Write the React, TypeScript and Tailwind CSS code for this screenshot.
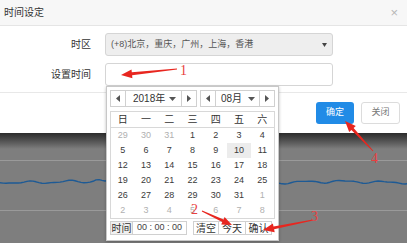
import React from "react";

const weeks: [number, boolean][][] = [
  [[29, false], [30, false], [31, false], [1, true], [2, true], [3, true], [4, true]],
  [[5, true], [6, true], [7, true], [8, true], [9, true], [10, true], [11, true]],
  [[12, true], [13, true], [14, true], [15, true], [16, true], [17, true], [18, true]],
  [[19, true], [20, true], [21, true], [22, true], [23, true], [24, true], [25, true]],
  [[26, true], [27, true], [28, true], [29, true], [30, true], [31, true], [1, false]],
  [[2, false], [3, false], [4, false], [5, false], [6, false], [7, false], [8, false]],
];
const weekdays = ["日", "一", "二", "三", "四", "五", "六"];

function arrowPts(tx: number, ty: number, hx: number, hy: number, head = 11, hw = 4.5, sw = 1.5, tw = 0.4) {
  const dx = hx - tx;
  const dy = hy - ty;
  const len = Math.hypot(dx, dy);
  const ux = dx / len;
  const uy = dy / len;
  const nx = -uy;
  const ny = ux;
  const bx = hx - ux * head;
  const by = hy - uy * head;
  const p = (x: number, y: number) => `${x.toFixed(1)},${y.toFixed(1)}`;
  return [
    p(tx + nx * tw, ty + ny * tw),
    p(bx + nx * sw, by + ny * sw),
    p(bx + nx * hw, by + ny * hw),
    p(hx, hy),
    p(bx - nx * hw, by - ny * hw),
    p(bx - nx * sw, by - ny * sw),
    p(tx - nx * tw, ty - ny * tw),
  ].join(" ");
}

function wavePath() {
  const pts: string[] = [];
  for (let x = 0; x <= 408; x += 3) {
    const y =
      49 +
      1.1 * Math.sin(x * 0.16) +
      0.5 * Math.sin(x * 0.31 + 1.3) +
      0.5 * Math.sin(x * 0.05 + 0.4) -
      (x > 92 && x < 104 ? 2.2 * Math.sin(((x - 92) / 12) * Math.PI) : 0);
    pts.push(`${x === 0 ? "M" : "L"}${x},${y.toFixed(2)}`);
  }
  return pts.join(" ");
}

const TriL = () => (
  <svg width="4" height="7" viewBox="0 0 4 7">
    <path d="M4 0 L0 3.5 L4 7 Z" fill="#555" />
  </svg>
);
const TriR = () => (
  <svg width="4" height="7" viewBox="0 0 4 7">
    <path d="M0 0 L4 3.5 L0 7 Z" fill="#555" />
  </svg>
);
const TriD = () => (
  <svg width="7" height="4" viewBox="0 0 7 4">
    <path d="M0 0 L7 0 L3.5 4 Z" fill="#555" />
  </svg>
);

export default function App() {
  return (
    <div className="relative w-[407px] h-[243px] overflow-hidden bg-white font-['Liberation_Sans','Noto_Sans_CJK_SC',sans-serif] text-[#333]">
      {/* header */}
      <div className="flex h-[26px] items-center justify-between border-b border-[#e5e5e5] bg-[#f7f7f7] pl-[4px] pr-[9px]">
        <span className="text-[10px] leading-none">时间设定</span>
        <span className="text-[13px] leading-none text-[#b8b8b8]">×</span>
      </div>

      {/* body */}
      <div className="flex h-[67px] flex-col gap-[7px] border-b border-[#e8e8e8] pt-[7px]">
        <div className="flex items-center">
          <div className="w-[91px] text-right text-[10px]">时区</div>
          <div className="ml-[14px] flex h-[23px] w-[228px] items-center justify-between rounded-[3px] border border-[#d5d5d5] bg-[#eeeeee] pl-[5px] pr-[5px]">
            <span className="text-[9px] text-[#555]">(+8)北京，重庆，广州，上海，香港</span>
            <svg width="5" height="4" viewBox="0 0 5 4">
              <path d="M0 0 L5 0 L2.5 4 Z" fill="#444" />
            </svg>
          </div>
        </div>
        <div className="flex items-center">
          <div className="w-[91px] text-right text-[10px]">设置时间</div>
          <div className="ml-[14px] h-[23px] w-[228px] rounded-[3px] border border-[#d5d5d5] bg-white" />
        </div>
      </div>

      {/* footer */}
      <div className="flex h-[40px] items-center justify-end gap-[7px] pr-[7px]">
        <div className="flex h-[22px] w-[38px] items-center justify-center rounded-[3px] bg-[#218be6] text-[9px] text-white">确定</div>
        <div className="flex h-[22px] w-[39px] items-center justify-center rounded-[3px] border border-[#dcdcdc] bg-white text-[9px] text-[#777]">关闭</div>
      </div>

      {/* chart */}
      <div className="relative h-[110px] bg-[#7e7e7e]">
        <div className="h-[16px] bg-linear-to-b from-[#2c2c2c] to-[#7e7e7e]" />
        <svg className="absolute inset-0" width="407" height="110" viewBox="0 0 407 110">
          <line x1="0" y1="27.5" x2="407" y2="27.5" stroke="#9a9a9a" strokeWidth="1" />
          <line x1="0" y1="77.5" x2="407" y2="77.5" stroke="#9a9a9a" strokeWidth="1" />
          <path d={wavePath()} fill="none" stroke="#1d5a95" strokeWidth="1.4" strokeLinejoin="round" />
        </svg>
      </div>

      {/* date picker popup */}
      <div className="absolute left-[106px] top-[86px] h-[155px] w-[173px] border border-[#c8c8c8] bg-white p-[3px] shadow-[0_1px_3px_rgba(0,0,0,0.25)]">
        <div className="flex h-[17px]">
          <div className="flex w-[87px] border border-[#d0d0d0]">
            <div className="flex w-[15px] items-center justify-center border-r border-[#d0d0d0]"><TriL /></div>
            <div className="flex flex-1 items-center justify-between pl-[7px] pr-[5px] text-[10px]">
              <span>2018年</span>
              <TriD />
            </div>
            <div className="flex w-[15px] items-center justify-center border-l border-[#d0d0d0]"><TriR /></div>
          </div>
          <div className="ml-[3px] flex w-[75px] border border-[#d0d0d0]">
            <div className="flex w-[15px] items-center justify-center border-r border-[#d0d0d0]"><TriL /></div>
            <div className="flex flex-1 items-center justify-between pl-[5px] pr-[4px] text-[10px]">
              <span>08月</span>
              <TriD />
            </div>
            <div className="flex w-[15px] items-center justify-center border-l border-[#d0d0d0]"><TriR /></div>
          </div>
        </div>

        <div className="mt-[4px] w-[165px] border border-[#d8d8d8]">
          <div className="grid h-[16px] grid-cols-7 border-b border-[#d8d8d8]">
            {weekdays.map((w) => (
              <div key={w} className="flex items-center justify-center text-[10px] text-[#333]">{w}</div>
            ))}
          </div>
          {weeks.map((row, ri) => (
            <div key={ri} className="grid h-[15px] grid-cols-7">
              {row.map(([d, cur], ci) => (
                <div
                  key={ci}
                  className={
                    "flex items-center justify-center text-[9px] " +
                    (cur ? "text-[#3a3a3a] " : "text-[#b0b0b0] ") +
                    (ri === 1 && ci === 5 ? "bg-[#ececec]" : "")
                  }
                >
                  {d}
                </div>
              ))}
            </div>
          ))}
        </div>

        <div className="mt-[2px] flex h-[14px] text-[10px]">
          <div className="flex w-[23px] items-center justify-center border border-[#d0d0d0] bg-[#f0f0f0]">时间</div>
          <div className="flex w-[54px] items-center justify-center border border-l-0 border-[#d0d0d0] text-[9px] text-[#444]">00 : 00 : 00</div>
          <div className="ml-[6px] flex w-[26px] items-center justify-center border border-[#d0d0d0]">清空</div>
          <div className="flex w-[27px] items-center justify-center border border-l-0 border-[#d0d0d0]">今天</div>
          <div className="flex w-[26px] items-center justify-center border border-l-0 border-[#d0d0d0]">确认</div>
        </div>
      </div>

      {/* annotations */}
      <svg className="pointer-events-none absolute inset-0" width="407" height="243" viewBox="0 0 407 243">
        <polygon points={arrowPts(177, 69, 121, 75)} fill="#e8261f" />
        <text x="180" y="75" fontFamily="Liberation Serif, serif" fontSize="14" fill="#e84040">1</text>
        <polygon points={arrowPts(202, 211, 232, 225, 10, 4)} fill="#e8261f" />
        <text x="191" y="214" fontFamily="Liberation Serif, serif" fontSize="14" fill="#e84040">2</text>
        <polygon points={arrowPts(313, 220, 263, 230, 11, 4.5)} fill="#e8261f" />
        <text x="311" y="221" fontFamily="Liberation Serif, serif" fontSize="14" fill="#e84040">3</text>
        <polygon points={arrowPts(373, 151, 345, 121, 11, 4.5)} fill="#e8261f" />
        <text x="371" y="163" fontFamily="Liberation Serif, serif" fontSize="14" fill="#e84040">4</text>
      </svg>
    </div>
  );
}
